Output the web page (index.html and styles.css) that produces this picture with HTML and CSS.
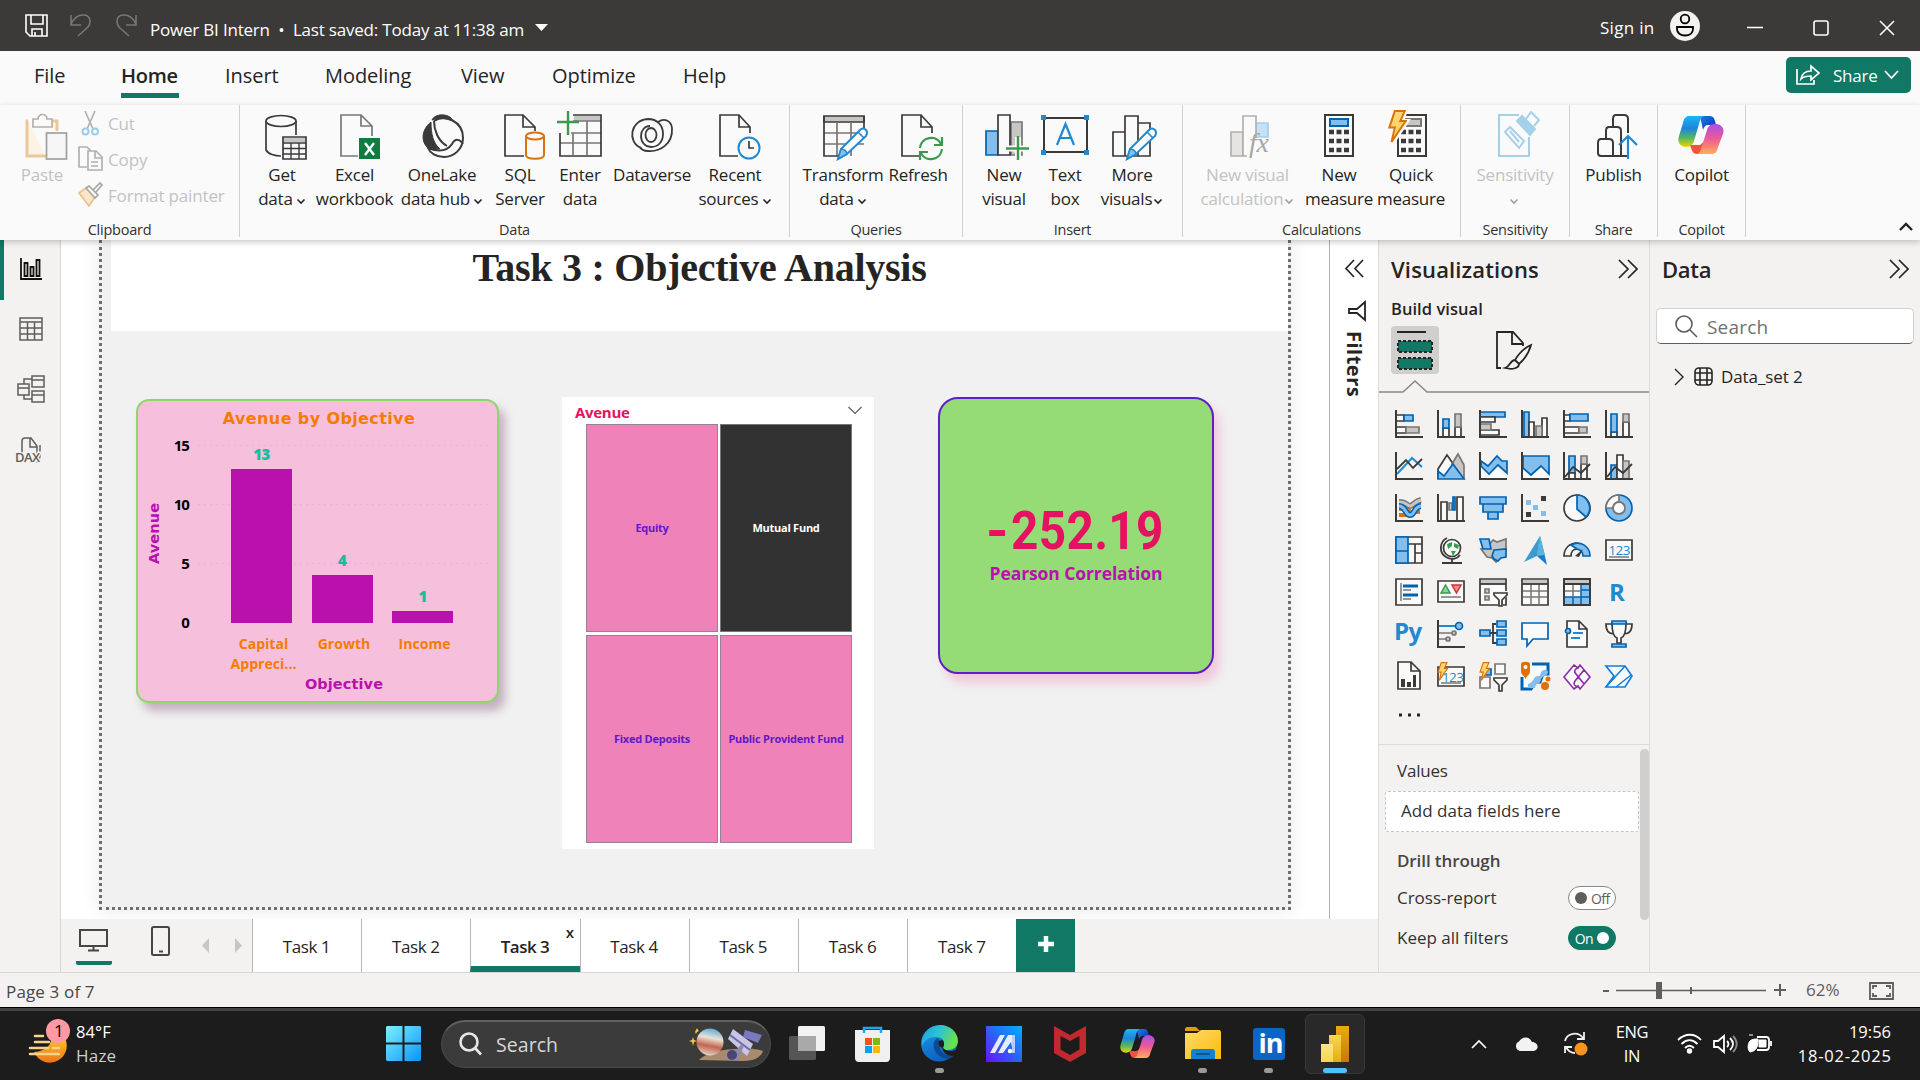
FILE: index.html
```html
<!DOCTYPE html>
<html lang="en">
<head>
<meta charset="utf-8">
<title>Power BI Intern</title>
<link rel="stylesheet" href="styles.css">
</head>
<body>
<svg class="defs" width="0" height="0">
  <defs>
    <linearGradient id="cpA" x1="0" y1="0" x2="0" y2="1"><stop offset="0" stop-color="#1fb5f5"/><stop offset=".4" stop-color="#1a86d9"/><stop offset=".72" stop-color="#5cb85a"/><stop offset="1" stop-color="#f5d400"/></linearGradient>
    <linearGradient id="cpB" x1="0" y1="0" x2="0" y2="1"><stop offset="0" stop-color="#a94fe8"/><stop offset=".5" stop-color="#ee5a94"/><stop offset="1" stop-color="#ffae5c"/></linearGradient>
    <linearGradient id="cpC" x1="0" y1="0" x2="1" y2="1"><stop offset="0" stop-color="#1b7fe0"/><stop offset="1" stop-color="#0a2fb8"/></linearGradient>
    <linearGradient id="win" x1="0" y1="0" x2="1" y2="1"><stop offset="0" stop-color="#7cf0ff"/><stop offset="1" stop-color="#0a95f8"/></linearGradient>
    <linearGradient id="sun" x1="0" y1="0" x2="0" y2="1"><stop offset="0" stop-color="#ffc928"/><stop offset="1" stop-color="#ef7418"/></linearGradient>
    <linearGradient id="edA" x1="0" y1="0" x2="1" y2=".4"><stop offset="0" stop-color="#1a9fe8"/><stop offset=".5" stop-color="#2cc3d2"/><stop offset="1" stop-color="#6be04f"/></linearGradient>
    <linearGradient id="edB" x1="0" y1="0" x2=".4" y2="1"><stop offset="0" stop-color="#1b9de2"/><stop offset="1" stop-color="#0b62c4"/></linearGradient>
    <linearGradient id="ma" x1="0" y1="1" x2="1" y2="0"><stop offset="0" stop-color="#6a12ff"/><stop offset=".5" stop-color="#2b62f5"/><stop offset="1" stop-color="#00b0ff"/></linearGradient>
    <linearGradient id="fol" x1="0" y1="0" x2="1" y2="1"><stop offset="0" stop-color="#ffdc6b"/><stop offset="1" stop-color="#fbb90a"/></linearGradient>
    <linearGradient id="pb1" x1="0" y1="0" x2="0" y2="1"><stop offset="0" stop-color="#e8ad0e"/><stop offset="1" stop-color="#c4790d"/></linearGradient>
    <linearGradient id="pb2" x1="0" y1="0" x2="0" y2="1"><stop offset="0" stop-color="#f6d751"/><stop offset="1" stop-color="#e6ad10"/></linearGradient>
    <linearGradient id="pb3" x1="0" y1="0" x2="0" y2="1"><stop offset="0" stop-color="#f9e589"/><stop offset="1" stop-color="#f6d751"/></linearGradient>
    <linearGradient id="planet" x1=".6" y1="0" x2=".4" y2="1"><stop offset="0" stop-color="#5fa8d8"/><stop offset=".35" stop-color="#e9e2d4"/><stop offset=".65" stop-color="#c4654f"/><stop offset="1" stop-color="#e0d8cc"/></linearGradient>
    <linearGradient id="bolt" x1="0" y1="0" x2="0" y2="1"><stop offset="0" stop-color="#ffd87a"/><stop offset="1" stop-color="#ffce52"/></linearGradient>
    <symbol id="copilot" viewBox="0 0 46 40">
      <path d="M22 1h10c4 0 5 4 6 9h-8c-3 0-4 2-5 5z" fill="url(#cpC)"/>
      <path d="M11 1h15c-3 1-4 4-5 8l-5 17c-1 4-4 6-8 6-6 0-9-5-7-11l4-13c1-5 3-7 6-7z" fill="url(#cpA)"/>
      <path d="M12 30h10l6-5-4 14h-5c-4 0-5-3-7-9z" fill="#f4513c"/>
      <path d="M34 39H19c3-1 4-4 5-8l5-16c1-4 4-6 8-6 6 0 10 4 8 10l-5 13c-1 5-3 7-6 7z" fill="url(#cpB)"/>
    </symbol>
    <symbol id="chev" viewBox="0 0 10 7"><path d="M1.500 1.500L5 5l3.500-3.500" fill="none" stroke="currentColor" stroke-width="1.600"/></symbol>
    <symbol id="dblR" viewBox="0 0 20 20"><path d="M1 1l9 9-9 9M10 1l9 9-9 9" fill="none" stroke="#252423" stroke-width="1.700"/></symbol>
    <symbol id="bolts" viewBox="0 0 16 30"><path d="M6 1h9l-4 9h5L3 29l3-13H1z" fill="url(#bolt)" stroke="#d9730d" stroke-width="1.800"/></symbol>
    <symbol id="pencil" viewBox="0 0 32 34"><path d="M2 32l3-10L24 3c2-2 4-2 6 0s1 4 0 6L11 27z" fill="#fafafa" stroke="#2089d0" stroke-width="2"/><path d="M2 32l3-10c3 0 6 2 6 5z" fill="#83beec" stroke="#2089d0" stroke-width="1.500"/><path d="M22 5l6 6" stroke="#2089d0" stroke-width="1.600"/></symbol>
  </defs>
</svg>

<header class="titlebar">
  <svg class="tb-save" width="24" height="24" fill="none" stroke="#fff" stroke-width="1.600"><path d="M1 1h21v21H5l-4-4zM6 1v9h12V1M7 22v-7h10v7M10 22v-4"/></svg>
  <svg class="tb-undo" width="22" height="24" fill="none" stroke="#797775" stroke-width="1.600"><path d="M1 1v10h10M1 10C4 4 8 1 13 1c9 0 8 9 4 13l-9 8"/></svg>
  <svg class="tb-redo" width="22" height="24" fill="none" stroke="#797775" stroke-width="1.600"><path d="M21 1v10H11M21 10C18 4 14 1 9 1 0 1 1 10 5 14l9 8"/></svg>
  <span class="tb-title">Power BI Intern&nbsp; •&nbsp; Last saved: Today at 11:38 am</span>
  <svg class="tb-caret" width="13" height="8"><path d="M0 0h13l-6.500 7z" fill="#fff"/></svg>
  <span class="signin">Sign in</span>
  <svg class="avatar" width="30" height="30"><circle cx="15" cy="15" r="15" fill="#f3f2f1"/><circle cx="15" cy="8" r="4.300" fill="none" stroke="#000" stroke-width="1.800"/><path d="M7 16h16v2c0 4-3.500 6.500-8 6.500S7 22 7 18z" fill="none" stroke="#000" stroke-width="1.800"/></svg>
  <svg class="win-btns" width="150" height="18" fill="none" stroke="#fff" stroke-width="1.600"><path d="M0 8.500h16M133 2l14 14M147 2l-14 14"/><rect x="67" y="2" width="14" height="14" rx="2"/></svg>
</header>

<nav class="menubar">
  <a class="m-file">File</a><a class="m-home">Home</a><a class="m-insert">Insert</a><a class="m-modeling">Modeling</a><a class="m-view">View</a><a class="m-opt">Optimize</a><a class="m-help">Help</a>
  <button class="share"><svg width="24" height="22" fill="none" stroke="#fff" stroke-width="1.700"><path d="M1 5v15h17v-4M5 15c1-6 5-8 10-8V2l8 7-8 7v-4c-4 0-7 0-10 3z"/></svg><span>Share</span><svg width="15" height="10" fill="none" stroke="#fff" stroke-width="1.800"><path d="M1 1l6.500 7L14 1"/></svg></button>
</nav>

<section class="ribbon">
  <div class="group g-clip">
    <div class="row">
      <div class="btn off w-paste"><svg class="ic" viewBox="0 0 48 48"><path d="M10 10H9v35h19M31 10h8v10" fill="#fdf3e3" stroke="#ecc79c" stroke-width="3" /><path d="M15 16V8h5c0-6 9-6 9 0h5v8z" fill="#fafafa" stroke="#b3b0ad" stroke-width="1.700"/><rect x="28.500" y="22" width="20" height="26" fill="#f6f6f6" stroke="#a19f9d" stroke-width="1.700"/></svg><span>Paste</span></div>
      <div class="clip-list">
        <div class="mini"><svg width="26" height="26" fill="none" stroke="#b3b0ad" stroke-width="1.700"><path d="M7 1l8 18M17 1L9 19"/><circle cx="7.500" cy="21.500" r="3" stroke="#9ccbe8" stroke-width="2"/><circle cx="17" cy="21.500" r="3" stroke="#9ccbe8" stroke-width="2"/></svg><span>Cut</span></div>
        <div class="mini"><svg width="26" height="26" fill="#fafafa" stroke="#b3b0ad" stroke-width="1.700"><path d="M9 21H1V1h8l4 4M10 5h8l6 6v13H10zM17 5v7h7M13 16h7M13 20h7"/></svg><span>Copy</span></div>
        <div class="mini"><svg width="26" height="26" fill="#fafafa" stroke="#a9a6a3" stroke-width="1.700"><path d="M1 11l7-5 9 9-6 9z" fill="#fbe6c8" stroke="#ecc08f"/><path d="M8 6l3-2 9 9-3 3zM15 8l7-7 2 2-6 7"/></svg><span>Format painter</span></div>
      </div>
    </div>
    <div class="glabel">Clipboard</div>
  </div>

  <div class="group g-data">
    <div class="row">
      <div class="btn b66"><svg class="ic" viewBox="0 0 48 48" fill="#fafafa" stroke="#3b3a39" stroke-width="1.700"><path d="M8 10v29c2 4 9 6 15 6M38 10v14" fill="none"/><ellipse cx="23" cy="10" rx="15" ry="5.500"/><path d="M25 26h23v22H25z"/><path d="M26 27h21v4H26z" fill="#c8c6c4" stroke="none"/><path d="M25 32h23M25 37.500h23M25 43h23M33 32v16M41 32v16" stroke-width="1.400"/></svg><span>Get<br>data <svg class="cv"><use href="#chev"/></svg></span></div>
      <div class="btn b79"><svg class="ic" viewBox="0 0 48 48" fill="none" stroke="#797775" stroke-width="1.700"><path d="M27 45H10V4h20l11 11v10M30 4v11h11"/><path d="M28 27h21v21H28z" fill="#107c41" stroke="none"/><path d="M34 32l9 12M43 32l-9 12" stroke="#fff" stroke-width="2.400"/></svg><span>Excel<br>workbook</span></div>
      <div class="btn b96"><svg class="ic" viewBox="0 0 48 48" fill="none" stroke="#3b3a39" stroke-width="2"><path d="M14 9C17 2 32 2 35 10c-8-3-14-3-21-1zM13 11c-10 8-10 20-3 26l12 1c-7-6-9-15-9-27z" fill="#3b3a39" stroke="#3b3a39" stroke-width="1"/><path d="M16 10c11-7 29 0 29 17 0 11-9 19-19 19-8 0-14-4-16-9 13 5 20 2 24-4 3-6 8-5 11 0M16 10c0 9 4 20 13 25"/></svg><span>OneLake<br>data hub <svg class="cv"><use href="#chev"/></svg></span></div>
      <div class="btn b60"><svg class="ic" viewBox="0 0 48 48" fill="none" stroke="#3b3a39" stroke-width="1.700"><path d="M28 45H9V4h18l12 12v4M27 4v12h12"/><path d="M30 25v19c0 5 18 5 18 0V25" fill="#fafafa" stroke="#d9730d" stroke-width="2"/><ellipse cx="39" cy="25" rx="9" ry="3.500" fill="#fafafa" stroke="#d9730d" stroke-width="2"/></svg><span>SQL<br>Server</span></div>
      <div class="btn b60"><svg class="ic" viewBox="0 0 48 48" fill="none" stroke="#797775" stroke-width="1.700"><path d="M18 5h26v5H18z" fill="#c8c6c4" stroke="none"/><path d="M4 32h41M15 22h30M17 22v22M31 10v34M17 10h28"/><path d="M17 4h28v41H4V22" stroke="#3b3a39"/><path d="M12 0v24M1 11h22" stroke="#3a9b50" stroke-width="2.400"/></svg><span>Enter<br>data</span></div>
      <div class="btn b84"><svg class="ic" viewBox="0 0 48 48" fill="none" stroke="#3b3a39" stroke-width="1.800"><path d="M13 37C-1 31 2 9 20 8c9 0 15 6 15 15 0 8-5 13-12 13-6 0-10-5-10-11s4-10 9-10"/><path d="M30 11c6-4 13-2 14 6 1 16-12 24-24 23-4 0-7-2-8-4"/><ellipse cx="23" cy="24" rx="5.500" ry="7"/></svg><span>Dataverse</span></div>
      <div class="btn b82"><svg class="ic" viewBox="0 0 48 48" fill="none" stroke="#3b3a39" stroke-width="1.700"><path d="M27 45H9V4h19l11 12v6M28 4v12h11"/><circle cx="38" cy="37" r="10.500" fill="#fafafa" stroke="#2089d0" stroke-width="2"/><path d="M38 30v7h5"/></svg><span>Recent<br>sources <svg class="cv"><use href="#chev"/></svg></span></div>
    </div>
    <div class="glabel">Data</div>
  </div>

  <div class="group g-query">
    <div class="row">
      <div class="btn b86"><svg class="ic" viewBox="0 0 48 48" fill="none" stroke="#797775" stroke-width="1.700"><path d="M5 5h40v6H5z" fill="#c8c6c4" stroke="#3b3a39"/><path d="M5 22h40M5 33h40M18 11v34M32 11v34"/><path d="M5 5v40h14M45 5v14" stroke="#3b3a39"/><use href="#pencil" x="17" y="16" width="32" height="34"/></svg><span>Transform<br>data <svg class="cv"><use href="#chev"/></svg></span></div>
      <div class="btn b64"><svg class="ic" viewBox="0 0 48 48" fill="none" stroke="#3b3a39" stroke-width="1.700"><path d="M25 45H8V4h19l11 12v6M27 4v12h11"/><g stroke="#3a9b50" stroke-width="2.200"><path d="M26 37c1-11 16-14 21-4M48 26v8h-8M48 38c-1 11-16 14-21 4M26 49v-8h8"/></g></svg><span>Refresh</span></div>
    </div>
    <div class="glabel">Queries</div>
  </div>

  <div class="group g-insert">
    <div class="row">
      <div class="btn b60"><svg class="ic" viewBox="0 0 48 48" stroke-width="1.700"><path d="M6 20h12v24H6z" fill="#83beec" stroke="#0063b1"/><path d="M31 11h11v33H31z" fill="#c8c6c4" stroke="#797775"/><path d="M18 4h12v40H18z" fill="#fafafa" stroke="#3b3a39"/><path d="M38 26v23M27 37.500h22" stroke="#fafafa" stroke-width="6"/><path d="M38 25v24M26 37.500h23" stroke="#3a9b50" stroke-width="2.400"/></svg><span>New<br>visual</span></div>
      <div class="btn b62"><svg class="ic" viewBox="0 0 48 48" fill="none" stroke="#3b3a39" stroke-width="2"><path d="M3 7h43v34H3z"/><path d="M16 34l8.500-21L33 34M19 27h11" stroke="#2089d0" stroke-width="2.200"/><path d="M0 4h5v5H0zM43 4h5v5h-5zM0 39h5v5H0zM43 39h5v5h-5z" fill="#2089d0" stroke="none"/></svg><span>Text<br>box</span></div>
      <div class="btn b72"><svg class="ic" viewBox="0 0 48 48" fill="#fafafa" stroke="#3b3a39" stroke-width="1.700"><path d="M5 21h12v24H5zM30 12h12v33H30zM17 5h13v40H17z"/><use href="#pencil" x="17" y="16" width="32" height="34"/></svg><span>More<br>visuals<svg class="cv cl"><use href="#chev"/></svg></span></div>
    </div>
    <div class="glabel">Insert</div>
  </div>

  <div class="group g-calc">
    <div class="row">
      <div class="btn off b113"><svg class="ic" viewBox="0 0 48 48" stroke="#b3b0ad" stroke-width="1.700"><path d="M7 21h12v24H7z" fill="#e5e4e3"/><path d="M32 12h12v14H32z" fill="#c8e0f4" stroke="#a6cdec"/><path d="M23 45h-4V5h13v22" fill="#fafafa"/><text x="25" y="41" class="fx">fx</text></svg><span>New visual<br>calculation<svg class="cv cl"><use href="#chev"/></svg></span></div>
      <div class="btn b70"><svg class="ic" viewBox="0 0 48 48" fill="#fafafa" stroke="#3b3a39" stroke-width="2"><path d="M10 4h28v41H10z"/><path d="M15 8h18v7H15z" fill="#83beec" stroke="#0063b1"/><path d="M14 21h5M21.500 21h5M29 21h5M14 30h5M21.500 30h5M29 30h5M14 39h5M21.500 39h5M29 39h5" stroke-width="4.500"/></svg><span>New<br>measure</span></div>
      <div class="btn b74"><svg class="ic" viewBox="0 0 48 48" fill="#fafafa" stroke="#3b3a39" stroke-width="2"><path d="M11 4h28v41H11z"/><path d="M17 8h17v7H17z" fill="#c8c6c4" stroke="#797775"/><path d="M14 21h5M21.500 21h5M29 21h5M14 30h5M21.500 30h5M29 30h5M14 39h5M21.500 39h5M29 39h5" stroke-width="4.500"/><path d="M7-1h14l-3 9h6L8 32z" stroke="none"/><use href="#bolts" x="0" y="-1" width="20" height="33"/></svg><span>Quick<br>measure</span></div>
    </div>
    <div class="glabel">Calculations</div>
  </div>

  <div class="group g-sens">
    <div class="row"><div class="btn off fill"><svg class="ic" viewBox="0 0 48 48" fill="none" stroke="#a6d0ea" stroke-width="2"><path d="M28 4H8v41h30V26M14 21l5-5 14 14-5 7zM19 20l9 11"/><path d="M26 10l5-5 13 13-5 6z" fill="#a6d0ea"/><path d="M35 8l5-7 8 8-5 6M37 12l5 5"/></svg><span>Sensitivity<br><svg class="cv"><use href="#chev"/></svg></span></div></div>
    <div class="glabel">Sensitivity</div>
  </div>
  <div class="group g-share">
    <div class="row"><div class="btn fill"><svg class="ic" viewBox="0 0 48 48" fill="#fafafa" stroke="#3b3a39" stroke-width="2"><path d="M23 45V8c0-3 1-4 3-4h8c3 0 4 1 4 4v14M37 45H23"/><path d="M16 27v-7c0-3 1-4 3-4h8c3 0 4 1 4 4v25"/><path d="M11 28h8c3 0 4 1 4 4v13H11c-2 0-3-1-3-3V32c0-3 1-4 3-4z"/><path d="M38 48V26M29 34l9-9 9 9" fill="none" stroke="#2089d0" stroke-width="2.200"/></svg><span>Publish</span></div></div>
    <div class="glabel">Share</div>
  </div>
  <div class="group g-cop">
    <div class="row"><div class="btn fill"><svg class="ic" viewBox="0 0 48 48"><use href="#copilot" x="0" y="4" width="46" height="40"/></svg><span>Copilot</span></div></div>
    <div class="glabel">Copilot</div>
  </div>
  <svg class="collapse" width="14" height="9" fill="none" stroke="#252423" stroke-width="2.400"><path d="M1 8l6-6 6 6"/></svg>
</section>

<main class="work">
  <aside class="rail">
    <div class="rail-item on"><svg width="22" height="22" fill="none" stroke="#111" stroke-width="1.800"><path d="M1 0v21h21M4.500 18V5h3v13zM10.500 18V9h3v9zM16.500 18V2h3v16z"/></svg></div>
    <div class="rail-item"><svg width="24" height="24" fill="none" stroke="#605e5c" stroke-width="1.500"><path d="M1 1h22v22H1zM1 5h22M1 11h22M1 17h22M8.500 5v18M15.500 5v18"/></svg></div>
    <div class="rail-item"><svg width="28" height="28" fill="none" stroke="#605e5c" stroke-width="1.500"><path d="M15 1h12v11H15zM15 5h12M15 16h12v11H15zM15 20h12M1 9h11v11H1zM1 13h11M7 9V4h8M7 20v4h8"/></svg></div>
    <div class="rail-item"><svg width="28" height="27" fill="none" stroke="#605e5c" stroke-width="1.500"><path d="M7 16V4c0-2 1-3 3-3h6l6 8v10c0 3-1 4-2 5M15 1v9h7M25 8v10c0 4-2 7-4 7"/><text x="0" y="25" class="dax">DAX</text></svg></div>
  </aside>

  <div class="center">
    <div class="upper">
      <div class="canvas">
        <div class="page">
          <h1 class="heading">Task 3 : Objective Analysis</h1>
          <div class="visuals">
            <section class="chart">
              <h2>Avenue by Objective</h2>
              <div class="plot">
                <div class="ytitle">Avenue</div>
                <div class="yaxis"><span>15</span><span>10</span><span>5</span><span>0</span></div>
                <div class="area">
                  <div class="bar"><b>13</b><i style="height:154px"></i></div>
                  <div class="bar"><b>4</b><i style="height:48px"></i></div>
                  <div class="bar"><b>1</b><i style="height:12px"></i></div>
                </div>
              </div>
              <div class="cats"><span>Capital<br>Appreci...</span><span>Growth</span><span>Income</span></div>
              <div class="xtitle">Objective</div>
            </section>
            <section class="slicer">
              <div class="s-head"><b>Avenue</b><svg width="14" height="9" fill="none" stroke="#605e5c" stroke-width="1.200"><path d="M.5 1L7 7.500 13.500 1"/></svg></div>
              <div class="cells"><div>Equity</div><div class="sel">Mutual Fund</div><div>Fixed Deposits</div><div>Public Provident Fund</div></div>
            </section>
            <section class="card"><div class="num"><span>-</span>252.19</div><div class="cap">Pearson Correlation</div></section>
          </div>
        </div>
      </div>
      <div class="filters">
        <svg width="19" height="19" fill="none" stroke="#252423" stroke-width="1.700"><path d="M9 1L1 9.500 9 18M18 1l-8 8.500 8 8.500"/></svg>
        <svg class="funnel" width="18" height="20" fill="none" stroke="#252423" stroke-width="1.800"><path d="M17 1v18l-8-7H1V8h8z"/></svg>
        <span>Filters</span>
      </div>
    </div>
    <div class="tabs">
      <div class="tools">
        <div class="dev on"><svg width="30" height="24" fill="none" stroke="#484644" stroke-width="2"><path d="M1 1h27v16H1zM14.500 17v4M9 21.500h11"/></svg></div>
        <div class="dev ph"><svg width="20" height="31" fill="none" stroke="#484644" stroke-width="2"><rect x="1" y="1" width="17" height="28" rx="1.500"/><path d="M8 25.500h4"/></svg></div>
        <svg class="arr" width="40" height="15" fill="#c8c6c4"><path d="M7 0v15L0 7.500zM33 0v15l7-7.500z"/></svg>
      </div>
      <div class="tab">Task 1</div><div class="tab">Task 2</div><div class="tab cur">Task 3<em>x</em></div><div class="tab">Task 4</div><div class="tab">Task 5</div><div class="tab">Task 6</div><div class="tab">Task 7</div>
      <div class="add"><svg width="18" height="18"><path d="M9 1v16M1 9h16" stroke="#fff" stroke-width="4.500"/></svg></div>
    </div>
  </div>

  <aside class="viz">
    <div class="p-head"><h3 class="h-viz">Visualizations</h3><svg width="20" height="20"><use href="#dblR"/></svg></div>
    <div class="build">Build visual</div>
    <div class="modes">
      <div class="mode on"><svg width="38" height="44"><path d="M1 4h29" stroke="#252423" stroke-width="2"/><path d="M2 13h34v11H2zM2 30h34v11H2z" fill="#117865" stroke="#252423" stroke-width="2" stroke-dasharray="3 2"/></svg></div>
      <div class="mode"><svg width="38" height="40" fill="none" stroke="#252423" stroke-width="1.800"><path d="M6 38H2V2h16l10 11v3M17 2v12h11M36 15c-7 3-13 10-16 15l4 4c6-5 10-12 12-19zM20 30c-5 0-4 6-10 8 8 2 14 0 14-4"/></svg></div>
    </div>
    <svg class="notch" width="270" height="14" fill="none" stroke="#8a8886" stroke-width="1.500"><path d="M0 12h24L36 1l12 11h222"/></svg>
    <div class="icons">
      <svg><path class="w" d="M1 5h8v6H1z"/><path class="b" d="M9 5h9v6H9z"/><path class="w" d="M1 17h10v6H1z"/><path class="g" d="M11 17h13v6H11z"/><path class="ax" d="M1 0v27h27"/></svg>
      <svg><path class="w" d="M6 18h6v9H6zM18 17h6v10h-6z"/><path class="b" d="M6 9h6v9H6z"/><path class="g" d="M18 4h6v13h-6z"/><path class="ax" d="M1 0v27h27"/></svg>
      <svg><path class="b" d="M1 2h25v5H1z"/><path class="w" d="M1 7h15v5H1zM1 20h19v5H1z"/><path class="g" d="M1 14h11v6H1z"/><path class="ax" d="M1 0v27h27"/></svg>
      <svg><path class="b" d="M3 2h5v25H3z"/><path class="w" d="M8 12h5v15H8zM21 8h5v19h-5z"/><path class="g" d="M15 16h6v11h-6z"/><path class="ax" d="M1 0v27h27"/></svg>
      <svg><path class="w" d="M1 5h6v6H1zM1 17h15v6H1z"/><path class="b" d="M7 4h18v7H7z"/><path class="g" d="M16 17h8v6h-8z"/><path class="ax" d="M1 0v27h27"/></svg>
      <svg><path class="w" d="M6 22h6v5H6zM18 12h6v15h-6z"/><path class="b" d="M6 4h6v18H6z"/><path class="g" d="M18 4h6v8h-6z"/><path class="ax" d="M1 0v27h27"/></svg>

      <svg><path class="ln" d="M2 22L17 6l10 9"/><path class="dk" d="M2 17l9-9 7 8 9-9"/><path class="ax" d="M1 0v27h27"/></svg>
      <svg><path class="w" d="M1 17L10 3l7 10-9 13H1z"/><path class="g" d="M15 12L21 2l6 11v13h-9z"/><path class="b" d="M1 27V19l6 5 9-12 11 15z"/></svg>
      <svg><path d="M2 19l7 6 9-9 9 9v2H2z" fill="#fafafa"/><path class="b" d="M2 9l7 5 9-10 5 5h5v12l-9-8-9 9-8-8z"/><path class="ax" d="M1 0v27h27"/></svg>
      <svg><path d="M2 16l8 7 9-9 9 9v4H2z" fill="#fafafa"/><path class="b" d="M2 4h26v18l-8-8-10 9-8-7z"/><path class="ax" d="M1 0v27h27"/></svg>
      <svg><path class="b" d="M6 4h6v17H6z"/><path class="w" d="M6 21h6v6H6zM18 12h6v15h-6z"/><path class="g" d="M18 4h6v8h-6z"/><path class="dk" d="M2 25l8-10 8 6 9-9"/><path class="ax" d="M1 0v27h27"/></svg>
      <svg><path class="b" d="M6 13h6v14H6z"/><path class="w" d="M12 3h6v24h-6z"/><path class="g" d="M18 9h6v18h-6z"/><path class="dk" d="M2 25l8-10 8 6 9-9"/><path class="ax" d="M1 0v27h27"/></svg>

      <svg><path d="M4 15h8l4 3h9M4 21h8l5-3h8" fill="none" stroke="#d9730d" stroke-width="4"/><path d="M4 8c8 0 8 4 11 4s5-5 11-6" fill="none" stroke="#797775" stroke-width="6"/><path d="M4 8c8 0 8 4 11 4s5-5 11-6" fill="none" stroke="#c8c6c4" stroke-width="3"/><path d="M4 12c7 0 6 9 11 9s4-9 11-9" fill="none" stroke="#0063b1" stroke-width="6"/><path d="M4 12c7 0 6 9 11 9s4-9 11-9" fill="none" stroke="#83beec" stroke-width="3"/><path class="ax" d="M1 0v27h27"/></svg>
      <svg><path class="w" d="M4 8h6v19H4zM20 3h6v24h-6z"/><path class="g" d="M12 9h3v7h-3z"/><path class="b" d="M16 3h2v13h-2z"/><path class="ax" d="M1 0v27h27"/></svg>
      <svg><path class="b" d="M1 3h26v7H1zM4 10h20v8H4zM9 18h10v7H9z"/></svg>
      <svg><path d="M20 2h5v5h-5zM5 18h5v5H5z" fill="#3b3a39"/><path d="M5 6h5v5H5zM12 11h5v5h-5zM20 17h5v5h-5z" fill="#83beec"/><path class="ax" d="M1 0v27h27"/></svg>
      <svg><circle class="w" cx="14" cy="14" r="13"/><path class="b" d="M14 1a13 13 0 0 1 9 22l-9-8z"/></svg>
      <svg><circle class="b" cx="14" cy="14" r="13"/><path class="gw" d="M14 1A13 13 0 0 0 1 14h7a6 6 0 0 1 6-6z"/><circle cx="14" cy="14" r="6" fill="#fafafa" stroke="#797775" stroke-width="1.800"/></svg>

      <svg><path class="w" d="M1 1h26v26H1zM13 8h14M20 8v19M20 17h7"/><path class="b" d="M1 1h12v26H1zM1 15h12"/></svg>
      <svg><circle cx="15" cy="12" r="8.500" class="w"/><path d="M10 8l5-2 0 4-4 3zM17 7l5 2-1 4-4-2zM14 15h5l-3 5z" fill="#3a9b50"/><path class="dk" d="M10 2C2 6 2 17 9 21c6 4 12 1 14-2M15 22v5M5 27h20"/></svg>
      <svg><path class="g" d="M14 4l4 2 9-3v11l-6 8-4 4-4-4-5-1-6-8 6-2z"/><path class="b" d="M1 3h9l2 10H4zM15 14l12-1v8l-5 1-3 3-4-2-2-3z"/></svg>
      <svg><path d="M19 0L3 26l13-6z" fill="#3a9bcf"/><path d="M19 0l7 29-10-9z" fill="#1b78cc"/><path d="M19 0l5 19-8 1z" fill="#59b4d9"/></svg>
      <svg><path class="w" d="M1 20C1 12 7 7 14 7v6c-4 0-6 3-6 7z"/><path class="b" d="M8 9c9-5 19 1 19 11h-7c0-4-2-6-6-7z"/><path d="M12 20l8-7-4 8z" fill="#3b3a39"/></svg>
      <svg><path class="w" d="M1 4h26v20H1z"/><path d="M4 21h20" stroke="#797775" stroke-width="1.500"/><text x="3.500" y="19" class="n123">123</text></svg>

      <svg><path class="w" d="M1 1h26v26H1z"/><path d="M6 5v18M8 12h8M8 21h8" stroke="#797775" stroke-width="1.500"/><path d="M8 8h15M8 17h15" stroke="#0063b1" stroke-width="3"/></svg>
      <svg><path class="w" d="M1 3h26v21H1z"/><path d="M4 15l4.500-8 4.500 8z" fill="#8fd0a0" stroke="#3a9b50" stroke-width="1.500"/><path d="M15 7h9l-4.500 8z" fill="#f08a8a" stroke="#d13438" stroke-width="1.500"/><path d="M4 19h20" stroke="#797775" stroke-width="1.500"/></svg>
      <svg><path class="w" d="M1 1h26v26H1z"/><path d="M2 2h24v4H2z" fill="#c8c6c4"/><path class="dk" d="M1 6h26"/><path class="g" d="M6 11h4v4H6zM6 18h4v4H6z"/><path d="M13 13h17v4l-6 5v7h-5v-7l-6-5z" fill="#f3f2f1"/><path class="w" d="M15 15h13v2l-5 5v6h-3v-6l-5-5z"/></svg>
      <svg><path class="w" d="M1 1h26v26H1z"/><path d="M2 2h24v4H2z" fill="#c8c6c4"/><path class="gr" d="M2 13h24M2 19h24M10 6v20M18 6v20"/><path class="dk" d="M1 6h26"/></svg>
      <svg><path class="w" d="M1 1h26v26H1z"/><path d="M18 6h8v20H2v-7h16z" fill="#83beec"/><path d="M2 2h24v4H2z" fill="#c8c6c4"/><path d="M18 6v20M2 19h24M10 19v7M18 12h8" stroke="#0063b1" stroke-width="1.500" fill="none"/><path class="gr" d="M2 13h16M10 6v13"/><path class="dk" d="M1 6h26M1 1h26v26H1z"/></svg>
      <svg><text x="4" y="23" class="rpy">R</text></svg>

      <svg><text x="-1" y="20" class="rpy">Py</text></svg>
      <svg><path class="ln" d="M2 6h18"/><circle class="b" cx="22" cy="6" r="3.500"/><path class="gr" d="M2 13h13M2 19h7"/><circle class="g" cx="17" cy="13" r="2"/><circle class="g" cx="11" cy="19" r="2"/><path class="ax" d="M1 0v27h27"/></svg>
      <svg><path class="dk" d="M10 13h8M17 4h-3v19h4"/><path class="b" d="M1 10h10v6H1zM18 1h9v6h-9zM18 10h9v6h-9zM18 19h9v6h-9z"/></svg>
      <svg><path class="bw" d="M1 3h26v16H12l-6 7v-7H1z"/></svg>
      <svg><path class="w" d="M4 9V1h12l8 8v18H4V14M16 1v8h8"/><path class="ln" d="M10 13h10M8 18h9"/><circle class="b" cx="5" cy="11" r="2.500"/></svg>
      <svg><path class="w" d="M7 4H1c0 7 3 10 8 10M21 4h6c0 7-3 10-8 10M7 3h14c0 9-2 14-5 15v5h-4v-5c-3-1-5-6-5-15z"/><path class="b" d="M7 1h14v3H7zM7 24h14v3H7z"/></svg>

      <svg><path class="w" d="M3 0h13l9 9v18H3zM16 0v9h9"/><path d="M6 17h4v8H6zM12 20h4v5h-4zM18 13h3v12h-3z" fill="#3b3a39"/></svg>
      <svg><path class="w" d="M1 5h26v19H1z"/><text x="5" y="20" class="n123">123</text><path d="M4 21h20" stroke="#797775" stroke-width="1.500"/><use href="#bolts" x="-1" y="0" width="13" height="19"/></svg>
      <svg><path class="gw" d="M16 2h10v10H16zM1 15h10v11H1z"/><path class="b" d="M5 7h7v6H5z"/><path class="w" d="M15 16h13v2l-5 5v6h-3v-6l-5-5z"/><use href="#bolts" x="-1" y="0" width="13" height="19"/></svg>
      <svg><path class="bw thick" d="M11 2h16v10h-5l-3 8h-4l-5 7H1V15"/><path d="M27 9c-5-4-8 2-8 5-8-1-4 5-12 8v4h7c0-6 6-3 6-9 2-4 7-2 7-8z" fill="#83beec"/><path d="M0 2c0-3 9-3 9 0v7c0 4-3 4-4.500 8C3 13 0 13 0 9z" fill="#e07000"/><circle cx="4.500" cy="5" r="2" fill="#fff"/><circle cx="27" cy="17" r="2.500" fill="#e07000"/><circle cx="24" cy="24" r="4" fill="#e07000"/></svg>
      <svg><path d="M1 15L11 3l4 3 2-3 10 12-10 12-2-3-4 3zM21 8l-9 11c-2 3-1 5 3 6M15 6c-4 1-4 4-2 6l8 10" fill="#fafafa" stroke="#8a2da5" stroke-width="1.600"/></svg>
      <svg><path d="M1 4h19l7 10-7 11H1l8-11z" fill="#fafafa" stroke="#0f7fe0" stroke-width="1.700"/><path d="M20 4L1 25M26 13L11 25" fill="none" stroke="#0f7fe0" stroke-width="1.600"/></svg>
      <svg class="more"><path d="M4 11h3M13 11h3M22 11h3" stroke="#252423" stroke-width="3"/></svg>
    </div>
    <div class="fields">
      <div class="f-val">Values</div>
      <div class="drop">Add data fields here</div>
      <div class="f-drill">Drill through</div>
      <div class="f-row"><span>Cross-report</span><div class="tog">Off</div></div>
      <div class="f-row second"><span>Keep all filters</span><div class="tog on">On</div></div>
      <div class="scroll"></div>
    </div>
  </aside>

  <aside class="data">
    <div class="p-head"><h3 class="h-data">Data</h3><svg width="20" height="20"><use href="#dblR"/></svg></div>
    <div class="search"><svg width="23" height="23" fill="none" stroke="#605e5c" stroke-width="1.600"><circle cx="9" cy="9" r="8"/><path d="M15 15l7 7"/></svg><span>Search</span></div>
    <div class="ds"><svg width="10" height="18" fill="none" stroke="#252423" stroke-width="1.400"><path d="M1 1l8 8-8 8"/></svg><svg width="19" height="19" fill="none" stroke="#252423" stroke-width="1.600"><rect x="1" y="1" width="17" height="17" rx="4"/><path d="M6 1v17M13 1v17M1 6h17M1 13h17"/></svg><span>Data_set 2</span></div>
  </aside>
</main>

<footer class="status">
  <span class="pg">Page 3 of 7</span>
  <svg class="zoom" width="184" height="20" stroke="#605e5c" fill="none"><path d="M0 10h6M171 9h12M177 3v12" stroke-width="2"/><path d="M13 9.500h150" stroke-width="1.500"/><path d="M56 1v17" stroke-width="6"/><path d="M88 6v7" stroke-width="2"/></svg>
  <span class="pct">62%</span>
  <svg class="fit" width="25" height="18" fill="none" stroke="#605e5c" stroke-width="1.800"><path d="M1 1h23v16H1zM4 7V4h4M17 4h4v3M4 11v3h4M17 14h4v-3"/></svg>
</footer>

<footer class="taskbar">
  <svg class="weather" width="38" height="46"><path d="M34 16A17 17 0 1 1 5 33c12-1 18-7 18-17z" fill="url(#sun)"/><path d="M6 17h8M6 23h14M1 29h18M1 35h29M24 29h6" stroke="#f5d38a" stroke-width="2.600" stroke-linecap="round"/><circle cx="29" cy="12" r="12" fill="#ff99a4"/><text x="25" y="18" class="badge">1</text></svg>
  <div class="temp"><span>84°F</span><span class="hz">Haze</span></div>
  <svg class="t-start" width="35" height="35" fill="url(#win)"><path d="M1 0h15.500v16.500H0V1zM18.500 0H34l1 1v15.500H18.500zM0 18.500h16.500V35H1l-1-1zM18.500 18.500H35V34l-1 1H18.500z"/></svg>
  <div class="t-search">
    <svg width="23" height="24" fill="none" stroke="#e8e8e8" stroke-width="2.600"><circle cx="10" cy="10" r="8.500"/><path d="M16 16l6 6.500"/></svg><span>Search</span>
    <svg class="art" width="76" height="40"><path d="M10 36c10-12 54-14 64-9-2 6-8 10-20 10z" fill="#a98a6c"/><path d="M4 13l1 3 3 1-3 1-1 4-1-4-3-1 3-1zM8 4l1 2 1 1-2 1-1 2-1-2z" fill="#f3c73a"/><circle cx="21" cy="18" r="13.500" fill="url(#planet)"/><path d="M44 5l20 15-6 12-19-17z" fill="#c9c5ea"/><path d="M41 11l20 15" stroke="#6f6a9a" stroke-width="2"/><path d="M56 6l17 5-4 8-15-6z" fill="#7a78c0"/><path d="M52 20l-9 13 5 4 7-15z" fill="#8f88b4"/><circle cx="43" cy="31" r="5" fill="#46467a"/></svg>
  </div>
  <svg class="t-view" width="36" height="35"><rect x="9" width="27" height="25" rx="1.500" fill="#f2f2f2"/><rect y="10" width="27" height="24" rx="1.500" fill="#555"/><rect x="9" y="10" width="18" height="15" fill="#a9a9a9"/></svg>
  <svg class="t-store" width="35" height="36"><path d="M9 7V2h17v5" fill="none" stroke="#1ea7ee" stroke-width="2.500"/><path d="M0 4h35v28c0 2-1 4-4 4H4c-3 0-4-2-4-4z" fill="#f0f0f0"/><path d="M9 7V4M26 7V4" stroke="#1ea7ee" stroke-width="2.500"/><path d="M10 12h7v7h-7z" fill="#f25022"/><path d="M18 12h7v7h-7z" fill="#7fba00"/><path d="M10 20h7v7h-7z" fill="#00a4ef"/><path d="M18 20h7v7h-7z" fill="#ffb900"/></svg>
  <div class="app t-edge"><svg width="37" height="37"><circle cx="18" cy="18.500" r="18" fill="url(#edB)"/><path d="M1 15C4 3 14 0 19 0c11 0 18 8 18 16 0 6-5 9-10 9-4 0-6-2-5-4 3-4 0-9-7-9-8 0-13 5-14 9z" fill="url(#edA)"/><path d="M17 13c-7 3-6 15 5 20 5 2 9 0 11-3-8 2-15-3-14-10 0-2 0-5-2-7z" fill="#0d4a94"/><path d="M18 16c-1 3 0 6 4 7 1-2 2-6-1-8z" fill="#1c1c1c"/><path d="M21 22c4 5 10 5 16 2v3l-5 4c-6 0-10-3-11-9z" fill="#1c1c1c"/></svg></div>
  <svg class="t-ma" width="36" height="36"><path d="M0 0h36v36H0z" fill="url(#ma)"/><path d="M4 27L14 9h5L9 27zM12 27L22 9h7v12l-3 0-1-5-8 11z" fill="#e6ecff"/><path d="M26 9h3v18h-3z" fill="#b9ccff"/><circle cx="24" cy="25" r="2.200" fill="#fff"/></svg>
  <svg class="t-mc" width="32" height="36"><path d="M0 0l16 9L32 0v27l-16 9-16-9zM6.500 10v13.500L16 29l9.500-5.500V10L16 15z" fill="#c1292e" fill-rule="evenodd"/></svg>
  <svg class="t-cp" width="35" height="31"><use href="#copilot" width="35" height="31"/></svg>
  <div class="app t-ex"><svg width="36" height="33"><path d="M0 2c0-1 1-2 2-2h9l4 4H0z" fill="#dd9d09"/><path d="M0 6h12l4-3h19l1 2v27H0z" fill="url(#fol)"/><path d="M6 32v-7c0-2 1-3 3-3h18c2 0 3 1 3 3v7z" fill="#1281d2"/><path d="M11 27h14" stroke="#0c5591" stroke-width="2"/></svg></div>
  <div class="app t-li"><svg width="32" height="32"><rect width="32" height="32" rx="3" fill="#0a66c2"/><text x="5.500" y="25" class="in">in</text></svg></div>
  <div class="app t-pb"><svg width="28" height="36"><path d="M15 0h13v36H15z" fill="url(#pb1)"/><path d="M8 9h12v27H8z" fill="url(#pb2)"/><path d="M0 18h12v18H0z" fill="url(#pb3)"/></svg></div>
  <svg class="t-caret" width="16" height="10" fill="none" stroke="#fff" stroke-width="1.700"><path d="M1 9l7-7 7 7"/></svg>
  <svg class="t-cloud" width="24" height="16"><path d="M6 15a5 5 0 0 1-1-9.500C7 1 15-1 18 6c7 0 8 9 0 9z" fill="#f2f2f2"/></svg>
  <svg class="t-sync" width="25" height="25" fill="none" stroke="#f2f2f2" stroke-width="1.800"><path d="M2 10C4 2 15 0 20 7M21 1v7h-7M2 22v-6h7M3 16c2 4 5 6 9 6"/><circle cx="18" cy="18" r="6.500" fill="#f7941d" stroke="none"/></svg>
  <div class="lang"><span>ENG</span><span>IN</span></div>
  <svg class="t-net" width="94" height="22" fill="none" stroke="#fff" stroke-width="1.800"><path d="M1 7c7-7 17-7 23 0M4.500 11c5-5 11-5 16 0M8 15c3-3 6-3 9 0"/><circle cx="12.500" cy="18" r="1.800" fill="#fff"/><path d="M37 8h4l6-5v16l-6-5h-4zM50 8c2 2 2 4 0 6M53 5c4 4 4 8 0 12" /><path d="M56 3c5 5 5 11 0 16" stroke="#8a8a8a"/><path d="M80 4h9c2 0 3 1 3 3v7c0 2-1 3-3 3h-9M94 8v5"/><path d="M82 7h7v7h-7z" fill="#fff" stroke-width="1"/><path d="M72 2h4M73 19c-3-3-2-9 0-11 2-2 5-2 8-2 0 7-1 12-8 13z" fill="#fff" stroke-width="1"/></svg>
  <div class="clock"><span>19:56</span><span class="date">18-02-2025</span></div>
</footer>
</body>
</html>
```

FILE: styles.css
```css
* { box-sizing: border-box; }
html, body { margin: 0; height: 1080px; overflow: hidden; }
body {
  width: 1920px; display: flex; flex-direction: column;
  font-family: "Open Sans", "Noto Sans", sans-serif; font-size: 17px; letter-spacing: -0.3px; color: #252423;
  background: #f3f2f1; font-style: normal; white-space: nowrap;
}
h1, h2, h3 { margin: 0; }
svg { flex: none; display: block; overflow: visible; }
.defs { position: absolute; }

/* title bar */
.titlebar { height: 51px; flex: none; background: #3b3a39; color: #fff; display: flex; align-items: center; padding-left: 25px; }
.tb-undo { margin-left: 21px; }
.tb-redo { margin-left: 23px; }
.tb-title { margin-left: 13px; padding-top: 7px; width: 375px; font-size: 17px; letter-spacing: -0.2px; }
.tb-caret { margin-left: 10px; margin-top: 4px; }
.signin { margin-left: auto; width: 56px; padding-top: 3px; letter-spacing: 0.3px; }
.avatar { margin-left: 14px; }
.win-btns { margin-left: 47px; margin-right: 23px; margin-top: 5px; }

/* menu */
.menubar { height: 54px; flex: none; background: #fafafa; display: flex; align-items: flex-start; padding-left: 34px; font-size: 20px; letter-spacing: -0.05px; }
.menubar a { height: 47px; line-height: 50px; display: block; }
.m-file { width: 87px; }
.m-home { width: 58px; margin-right: 46px; font-weight: 600; letter-spacing: -0.3px; border-bottom: 5px solid #117865; }
.m-insert { width: 100px; }
.m-modeling { width: 136px; }
.m-view { width: 91px; }
.m-opt { width: 131px; }
.share { margin: 6px 9px 0 auto; width: 125px; height: 36px; border: 0; border-radius: 5px; background: #117865; color: #fff; font: inherit; font-size: 17px; letter-spacing: -0.2px; display: flex; align-items: center; padding: 0 0 0 10px; }
.share span { margin: 0 6px 0 13px; }

/* ribbon */
.ribbon { height: 135px; flex: none; background: #fafafa; display: flex; position: relative; z-index: 2; box-shadow: 0 2px 6px rgba(0,0,0,.22); }
.group { height: 132px; border-right: 1px solid #d2d0ce; display: flex; flex-direction: column; }
.g-clip { width: 240px; } .g-data { width: 550px; } .g-query { width: 173px; } .g-insert { width: 220px; }
.g-calc { width: 278px; } .g-sens { width: 109px; } .g-share { width: 88px; } .g-cop { width: 88px; }
.row { display: flex; flex: none; height: 116px; padding-top: 6px; }
.g-clip .row { padding-left: 9px; }
.g-data .row { padding-left: 9px; } .g-query .row { padding-left: 10px; } .g-insert .row { padding-left: 11px; } .g-calc .row { padding-left: 8px; }
.glabel { text-align: center; font-size: 14.500px; line-height: 18px; letter-spacing: -0.25px; color: #323130; }
.btn { display: flex; flex-direction: column; align-items: center; text-align: center; line-height: 24px; letter-spacing: -0.22px; }
.btn span { margin-top: 4px; }
.ic { width: 48px; height: 48px; }
.cv { display: inline-block; width: 10px; height: 7px; margin-left: -1px; vertical-align: 0; }
.cl { margin-left: 1px; }
.off { color: #c4c2c0; }
.off .cv { color: #a19f9d; }
.w-paste { width: 66px; } .b60 { width: 60px; } .b62 { width: 62px; } .b64 { width: 64px; } .b66 { width: 66px; } .b70 { width: 70px; } .b72 { width: 72px; } .b74 { width: 74px; }
.b79 { width: 79px; } .b82 { width: 82px; } .b84 { width: 84px; } .b86 { width: 86px; } .b96 { width: 96px; } .b113 { width: 113px; }
.btn.fill { flex: 1; }
.clip-list { display: flex; flex-direction: column; padding-left: 3px; color: #c4c2c0; margin-top: -6px; }
.mini { height: 36px; display: flex; align-items: center; gap: 4px; letter-spacing: -.15px; }
.fx { font: italic 28px "Liberation Serif", serif; fill: #a9a6a3; stroke: none; }
.collapse { margin: 117px 7px 0 auto; }

/* work area */
.work { height: 732px; flex: none; display: flex; }
.rail { width: 61px; border-right: 1px solid #d8d6d4; background: #f3f2f1; }
.rail-item { height: 60px; display: flex; align-items: center; justify-content: center; padding-left: 1px; }
.rail-item.on { height: 60px; border-left: 4px solid #117865; padding: 0 2px 2px 0; }
.rail-item:nth-child(2) { height: 57px; }
.rail-item:nth-child(3) { height: 63px; }
.rail-item:nth-child(4) { padding: 0 3px 0 0; }
.dax { font: 600 13px "Open Sans", sans-serif; letter-spacing: -.5px; fill: #605e5c; stroke: #f3f2f1; stroke-width: 3; paint-order: stroke; }
.center { width: 1317px; display: flex; flex-direction: column; }
.upper { height: 679px; display: flex; }
.canvas { width: 1268px; background: #fff; overflow: hidden; padding-left: 38px; }
.page { width: 1192px; height: 670px; border: 3px dotted #6e6e73; border-top: 0; background: #f1f1f1; box-shadow: 0 0 18px rgba(0,0,0,.09); padding-left: 9px; }
.heading { height: 91px; width: 1177px; background: #fff; text-align: center; font: bold 40px/56px "Liberation Serif", serif; letter-spacing: -0.250px; color: #252423; }
.visuals { display: flex; align-items: flex-start; padding: 66px 0 0 25px; }

.chart { width: 363px; height: 304px; margin-top: 2px; border: 2px solid #8bd867; border-radius: 13px; background: #f6c0dc; box-shadow: 6px 8px 10px rgba(120,70,110,.38); font-weight: 700; }
.chart h2 { margin-top: 8px; height: 20px; padding-left: 3px; text-align: center; font: 700 16px/20px "DejaVu Sans", sans-serif; letter-spacing: 0.38px; color: #f57c00; }
.plot { display: flex; height: 194px; }
.ytitle { width: 31px; display: flex; align-items: center; justify-content: center; writing-mode: vertical-rl; transform: rotate(180deg); font: 700 14.500px/20px "DejaVu Sans", sans-serif; letter-spacing: .1px; color: #b910ae; padding-bottom: 15px; }
.yaxis { width: 20px; padding-top: 6px; font-size: 15px; line-height: 20px; display: flex; flex-direction: column; gap: 39px; text-align: right; color: #000; letter-spacing: -.9px; }
.area { flex: 1; margin: 0 9px; display: flex; gap: 19.500px; align-items: flex-end; padding-left: 33px; background: repeating-linear-gradient(90deg, transparent 0 2px, #f6c0dc 2px 6px), linear-gradient(#e2b6de,#e2b6de) 0 16px/100% 1px no-repeat, linear-gradient(#e2b6de,#e2b6de) 0 75px/100% 1px no-repeat, linear-gradient(#e2b6de,#e2b6de) 0 134px/100% 1px no-repeat; }
.bar { width: 61px; display: flex; flex-direction: column; align-items: center; color: #1abc9c; font-size: 15px; line-height: 20px; letter-spacing: -.6px; }
.bar i { width: 100%; background: #b910ae; margin-top: 5px; }
.cats { display: flex; gap: 19.500px; padding-left: 95px; margin-top: 11px; height: 40px; font-size: 14px; line-height: 20px; color: #f57c00; }
.cats span { width: 61px; display: flex; justify-content: center; text-align: center; letter-spacing: .05px; }
.xtitle { text-align: center; padding-left: 53px; font: 700 14.500px/20px "DejaVu Sans", sans-serif; letter-spacing: .1px; color: #b910ae; }

.slicer { margin-left: 63px; width: 312px; height: 452px; background: #fff; }
.s-head { height: 27px; display: flex; justify-content: space-between; align-items: center; padding: 3px 12px 0 13px; color: #e61162; font-size: 15px; }
.s-head svg { margin-top: -4px; }
.cells { display: grid; grid-template: 208px 208px / 132px 132px; gap: 3px 2px; padding-left: 24px; font-size: 11px; font-weight: 700; color: #6219c8; letter-spacing: -0.25px; }
.cells div { background: #ef83b9; border: 1px solid #9b7f92; display: flex; align-items: center; justify-content: center; padding-bottom: 2px; }
.cells .sel { background: #323232; color: #fff; border-color: #777; }

.card { margin-left: 64px; width: 276px; height: 277px; border: 2px solid #5f1ec8; border-radius: 20px; background: #95db76; box-shadow: 6px 9px 10px rgba(240,140,190,.4); text-align: center; }
.num { margin-top: 102px; height: 60px; font: 700 53px/60px Roboto, sans-serif; letter-spacing: .4px; color: #e61162; transform: scaleX(.9); }
.num span { display: inline-block; transform: scaleX(1.200); margin-right: 4px; }
.cap { font-weight: 700; font-size: 17.500px; line-height: 24px; letter-spacing: -0.1px; color: #b910ae; }

.filters { width: 49px; border-left: 1px solid #b3b0ad; background: #fff; padding: 19px 0 0 15px; }
.filters .funnel { margin: 23px 0 0 3px; }
.filters span { display: block; writing-mode: vertical-rl; font-weight: 700; font-size: 20px; line-height: 24px; letter-spacing: .5px; margin: 10px 0 0 -3px; }

.tabs { height: 53px; display: flex; background: #f3f2f1; }
.tools { width: 191px; display: flex; padding-left: 15px; }
.dev { width: 36px; height: 46px; padding: 10px 0 0 3px; }
.dev.on { border-bottom: 4px solid #117865; border-radius: 2px; }
.dev.ph { margin-left: 36px; padding: 7px 0 0 3px; width: 20px; }
.arr { margin: 19px 0 0 34px; }
.tab { width: 109.200px; background: #fff; border-left: 1px solid #b8b6b4; display: flex; align-items: center; justify-content: center; letter-spacing: -.4px; padding: 2px 1px 0 0; }
.cur { font-weight: 600; border-bottom: 6px solid #117865; padding-top: 8px; position: relative; letter-spacing: -.55px; }
.cur em { position: absolute; right: 6px; top: 3px; font-style: normal; font-size: 15px; }
.add { width: 59px; background: #117865; display: flex; align-items: center; justify-content: center; padding-bottom: 3px; }

/* panes */
.viz { width: 272px; border-left: 1px solid #dddbd9; border-right: 1px solid #dddbd9; display: flex; flex-direction: column; }
.p-head { height: 58px; display: flex; justify-content: space-between; align-items: center; padding: 0 11px 0 12px; }
.p-head h3 { font-size: 22px; font-weight: 600; letter-spacing: .15px; }
.p-head .h-data { letter-spacing: -.3px; }
.build { padding-left: 12px; line-height: 22px; height: 24px; font-weight: 600; font-size: 16.500px; letter-spacing: .05px; }
.modes { display: flex; padding: 4px 0 0 12px; gap: 51px; height: 52px; }
.mode { width: 48px; height: 48px; border-radius: 4px; display: flex; align-items: center; justify-content: center; }
.mode.on { background: #d0cfcd; }
.notch { margin-top: 6px; }
.icons { display: grid; grid-template-columns: repeat(6, 28px); grid-auto-rows: 28px; gap: 14px; padding: 16px 0 0 16px; height: 351px; border-bottom: 1px solid #dddbd9; }
.icons svg { width: 28px; height: 28px; }
.w { fill: #fafafa; stroke: #3b3a39; stroke-width: 1.700; }
.b { fill: #83beec; stroke: #0063b1; stroke-width: 1.700; }
.g { fill: #c8c6c4; stroke: #797775; stroke-width: 1.700; }
.gw { fill: #fafafa; stroke: #797775; stroke-width: 1.700; }
.bw { fill: #fafafa; stroke: #0063b1; stroke-width: 1.700; }
.thick { stroke-width: 3; }
.ax { fill: none; stroke: #3b3a39; stroke-width: 2; }
.dk { fill: none; stroke: #3b3a39; stroke-width: 1.800; }
.gr { fill: none; stroke: #797775; stroke-width: 1.500; }
.ln { fill: none; stroke: #2089d0; stroke-width: 2; }
.n123 { font: 13.500px "Open Sans", sans-serif; fill: #2089d0; letter-spacing: -.6px; }
.rpy { font: 700 24px "Open Sans", sans-serif; fill: #2089d0; letter-spacing: -.5px; }

.fields { flex: 1; position: relative; padding: 14px 0 0 6px; font-size: 17px; color: #323130; }
.f-val { padding-left: 12px; line-height: 24px; letter-spacing: -.2px; }
.drop { margin-top: 8px; width: 254px; height: 41px; border: 1px dashed #c8c6c4; border-radius: 3px; background: #fff; padding-left: 15px; line-height: 38px; letter-spacing: .03px; }
.f-drill { padding: 16px 0 0 12px; line-height: 26px; font-weight: 600; letter-spacing: -.1px; color: #484644; }
.f-row { display: flex; justify-content: space-between; align-items: center; height: 24px; padding: 0 33px 0 12px; margin-top: 12px; letter-spacing: -.02px; }
.f-row span { padding-bottom: 2px; }
.second { margin-top: 16px; }
.tog { width: 48px; height: 24px; border: 1px solid #8a8886; border-radius: 12px; background: #fff; font-size: 14px; letter-spacing: -.6px; color: #605e5c; display: flex; align-items: center; padding: 1px 0 0 6px; gap: 4px; }
.tog::before { content: ""; width: 12px; height: 12px; border-radius: 6px; background: #605e5c; margin-top: -1px; }
.tog.on { flex-direction: row-reverse; background: #117865; border-color: #117865; color: #fff; padding: 1px 6px 0 0; }
.tog.on::before { background: #fff; }
.scroll { position: absolute; right: 0; top: 4px; width: 9px; height: 171px; border-radius: 5px; background: #d0cfcd; }

.data { flex: 1; }
.search { margin: 10px 6px 0 6px; height: 36px; border: 1px solid #d2d0ce; border-bottom: 1.500px solid #605e5c; border-radius: 5px; background: #fff; display: flex; align-items: center; padding-left: 18px; gap: 9px; color: #707070; font-size: 19px; letter-spacing: .2px; }
.search span { padding-top: 2px; }
.ds { display: flex; align-items: center; padding: 20px 0 0 24px; height: 45px; }
.ds svg + svg { margin: 0 8px 0 10px; }
.ds span { font-size: 17px; letter-spacing: -.1px; }

/* status */
.status { height: 36px; flex: none; border-top: 1px solid #d8d6d4; display: flex; align-items: center; padding: 0 26px 0 6px; color: #484644; }
.pg { letter-spacing: .15px; padding-top: 1px; }
.zoom { margin-left: auto; }
.pct { margin: 0 0 0 19px; width: 63px; letter-spacing: 0; padding-bottom: 2px; color: #605e5c; }

/* taskbar */
.taskbar { height: 72px; flex: none; background: #1c1c1c; border-top: 3px solid #424242; box-shadow: 0 -1px 0 #000; display: flex; align-items: center; color: #fff; padding: 0 29px 4px 29px; font-size: 16.500px; letter-spacing: -.35px; }
.badge { font: 17px "Open Sans", sans-serif; fill: #000; }
.weather { margin-top: -3px; }
.temp { width: 46px; margin-left: 9px; display: flex; flex-direction: column; line-height: 24px; letter-spacing: .1px; }
.hz { color: #cfcfcf; font-size: 17px; letter-spacing: .2px; }
.t-start { margin-left: 264px; }
.t-search { margin-left: 20px; width: 330px; height: 48px; border-radius: 24px; background: #3b3b3b; border: 1px solid #4a4a4a; border-top: 2px solid #606060; display: flex; align-items: center; padding-left: 17px; color: #d6d6d6; font-size: 19.500px; letter-spacing: .05px; }
.t-search span { margin-left: 14px; }
.art { margin-left: auto; margin-right: 5px; }
.t-view { margin-left: 18px; }
.t-store { margin-left: 30px; }
.app { height: 60px; display: flex; align-items: center; position: relative; }
.app::after { content: ""; position: absolute; left: 50%; bottom: 1px; width: 9px; height: 5px; margin-left: -5px; border-radius: 3px; background: #9a9a9a; }
.t-edge { margin-left: 31px; }
.t-ma { margin-left: 28px; }
.t-mc { margin-left: 32px; }
.t-cp { margin-left: 34px; }
.t-ex { margin-left: 30px; }
.t-li { margin-left: 32px; }
.t-pb { margin-left: 20px; width: 60px; border-radius: 6px; background: #292929; border: 1px solid #383838; justify-content: center; }
.t-pb::after { width: 24px; margin-left: -12px; background: #4cc2ff; bottom: 0; }
.in { font: 700 27px "Open Sans", sans-serif; fill: #fff; letter-spacing: -1px; }
.t-caret { margin-left: 106px; }
.t-cloud { margin-left: 27px; }
.t-sync { margin-left: 25px; }
.lang { margin-left: 25px; width: 38px; display: flex; flex-direction: column; align-items: center; line-height: 24px; }
.t-net { margin-left: 26px; }
.clock { margin-left: auto; text-align: right; display: flex; flex-direction: column; line-height: 24px; letter-spacing: 0; }
.date { letter-spacing: .8px; margin-right: -.8px; }
```
